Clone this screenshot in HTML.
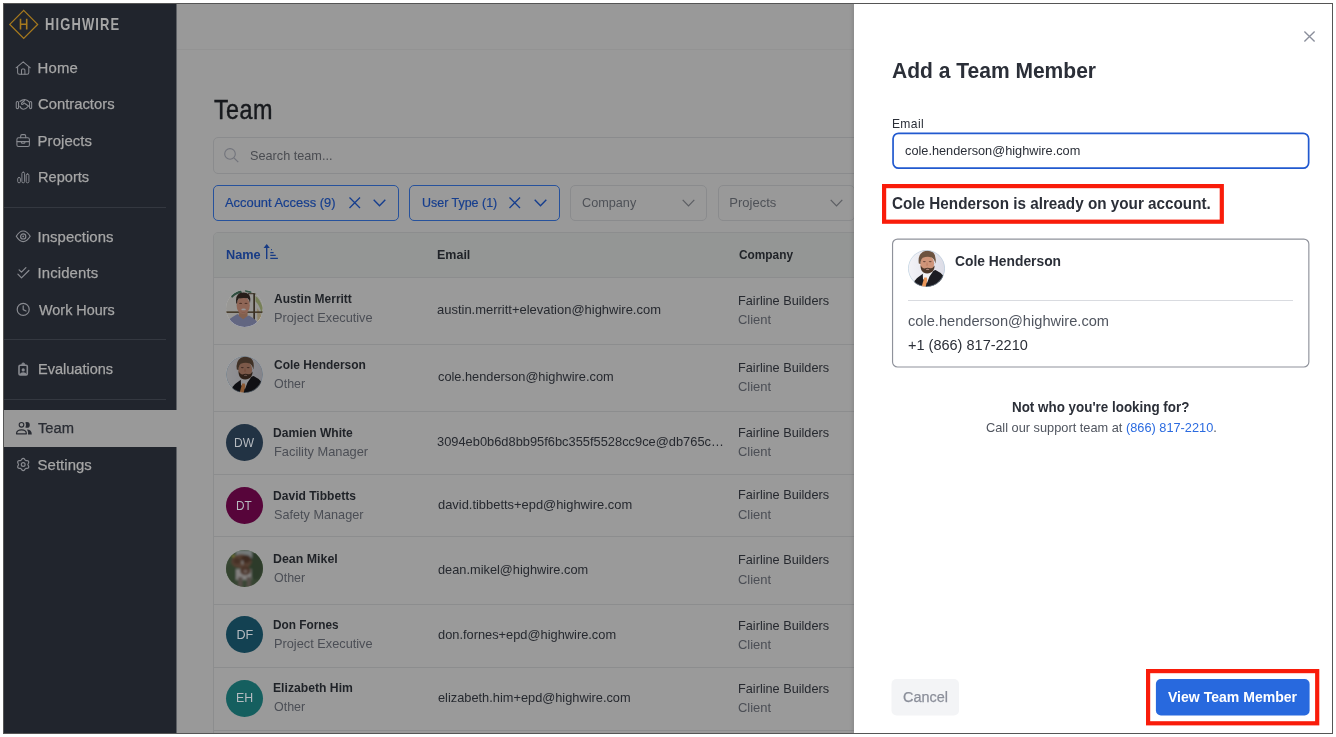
<!DOCTYPE html>
<html lang="en"><head><meta charset="utf-8"><title>Team - Highwire</title>
<style>
html,body{margin:0;padding:0;background:#fff;}
body{width:1336px;height:737px;overflow:hidden;position:relative;font-family:"Liberation Sans",sans-serif;}
#clip{position:absolute;left:4px;top:4px;width:1328px;height:729px;overflow:hidden;background:#999;}
#org{position:absolute;left:-4px;top:-4px;width:1336px;height:737px;}
#frame{position:absolute;left:3px;top:3px;width:1328px;height:729px;border:1px solid #555;pointer-events:none;}
.t{position:absolute;white-space:nowrap;font-family:"Liberation Sans",sans-serif;}
.a{position:absolute;}
.av{position:absolute;border-radius:50%;overflow:hidden;}
.hl{position:absolute;height:1px;}
.chip{position:absolute;box-sizing:border-box;border-radius:5px;}
.red{position:absolute;box-sizing:border-box;border:4px solid #f91c0a;}
svg{position:absolute;overflow:visible;}
#org{will-change:transform;}

</style></head>
<body>
<div id="clip"><div id="org">
<main id="team-page">
<div class="a" style="left:176px;top:4px;width:678px;height:45px;background:#999"></div>
<div class="hl" style="left:176px;top:49px;width:678px;background:#939393"></div>
<div class="chip" style="left:213px;top:137px;width:700px;height:37px;border:1px solid #8a8b8d;background:#999"></div>
<svg style="left:224px;top:148px" width="16" height="16" viewBox="0 0 16 16"><circle cx="6" cy="5.9" r="5.3" fill="none" stroke="#72747c" stroke-width="1.1"/><path d="M9.9 9.8 L14.3 14.2" stroke="#72747c" stroke-width="1.2" fill="none"/></svg>
<div class="chip" style="left:213px;top:185px;width:186px;height:36px;border:1px solid #27529c;background:#9a9a9a"></div>
<svg style="left:348.6px;top:196.8px" width="12" height="12" viewBox="0 0 12 12"><path d="M0.5 0.5 L11 11 M11 0.5 L0.5 11" stroke="#163e8e" stroke-width="1.3" fill="none"/></svg>
<svg style="left:373px;top:199px" width="13" height="8" viewBox="0 0 13 8"><path d="M0.7 0.8 L6.5 6.8 L12.3 0.8" stroke="#163e8e" stroke-width="1.4" fill="none"/></svg>
<div class="chip" style="left:409px;top:185px;width:151px;height:36px;border:1px solid #27529c;background:#9a9a9a"></div>
<svg style="left:508.8px;top:196.8px" width="12" height="12" viewBox="0 0 12 12"><path d="M0.5 0.5 L11 11 M11 0.5 L0.5 11" stroke="#163e8e" stroke-width="1.3" fill="none"/></svg>
<svg style="left:534px;top:199px" width="13" height="8" viewBox="0 0 13 8"><path d="M0.7 0.8 L6.5 6.8 L12.3 0.8" stroke="#163e8e" stroke-width="1.4" fill="none"/></svg>
<div class="chip" style="left:570px;top:185px;width:137px;height:36px;border:1px solid #8a8b8d;background:#999"></div>
<svg style="left:682px;top:199px" width="13" height="8" viewBox="0 0 13 8"><path d="M0.7 0.8 L6.5 6.8 L12.3 0.8" stroke="#5c5e63" stroke-width="1.2" fill="none"/></svg>
<div class="chip" style="left:718px;top:185px;width:137px;height:36px;border:1px solid #8a8b8d;background:#999"></div>
<svg style="left:830px;top:199px" width="13" height="8" viewBox="0 0 13 8"><path d="M0.7 0.8 L6.5 6.8 L12.3 0.8" stroke="#5c5e63" stroke-width="1.2" fill="none"/></svg>
<div class="a" style="left:213px;top:232px;width:700px;height:520px;box-sizing:border-box;border:1px solid #8c8d8e;border-radius:5px 0 0 0;background:#9a9a9a"></div>
<div class="a" style="left:214px;top:233px;width:700px;height:45px;background:#949695;border-radius:4px 0 0 0"></div>
<svg style="left:262px;top:243px" width="18" height="18" viewBox="0 0 18 18"><path d="M4.7 15.9 V2.2" stroke="#173b85" stroke-width="1.4" fill="none"/><path d="M1.6 5 L4.7 1.1 L7.8 5 Z" fill="#173b85"/><path d="M9 6.7 H9.9 M8.3 9.6 H11.6 M8.3 12.4 H13.7 M8.3 15.4 H15.9" stroke="#173b85" stroke-width="1.2" fill="none"/></svg>
<div class="hl" style="left:214px;top:277px;width:700px;background:#8c8d8e"></div>
<div class="av" style="left:226px;top:290px;width:37px;height:37px;"><svg style="left:0;top:0" width="37" height="37" viewBox="0 0 37 37"><defs><filter id="ba" x="-10%" y="-10%" width="120%" height="120%"><feGaussianBlur stdDeviation="0.6"/></filter></defs><rect width="37" height="37" fill="#fdfcf7"/><g filter="url(#ba)"><path d="M5 6 Q9 1 15 0.5 L16 3 Q10 3.5 6 8 Z" fill="#4f7f68"/><path d="M19 0 L26 1.4 L25 3 L19.5 2 Z" fill="#5f8f78"/><path d="M29.5 6 Q34 9 36.5 17 L36 24 Q33 14 29.5 11.5 Z" fill="#c6d592"/><path d="M31 18 Q35 22 35.5 29 L31.5 32 Z" fill="#efdcae"/><rect x="27.3" y="3.2" width="1.7" height="30" fill="#5a4c3a"/><rect x="0" y="21.4" width="37" height="1.5" fill="#6a583c"/><rect x="22" y="3.2" width="12" height="1" fill="#5a4c3a"/><path d="M3 29.5 Q7 26.5 11.5 24 L17 27.5 L23 25.5 Q28 28 31.5 32.5 L28 37 L8 37 Z" fill="#a4aad8"/><path d="M12.8 22 L12.8 26 L17.2 29.3 L21.6 26 L21.6 22 Z" fill="#dba083"/><ellipse cx="17.2" cy="15.4" rx="6.6" ry="8.6" fill="#eeaa90"/><path d="M10.2 13.5 Q9.2 5 14 3 Q19.6 1.2 23 4.6 Q25 7.6 24 13 Q23.4 9.4 21.6 8.2 Q16.6 7.4 12.6 8.6 Q11.2 10 11 13.6 Z" fill="#42332c"/><ellipse cx="14.6" cy="13.4" rx="1.5" ry="0.7" fill="#8a5a48"/><ellipse cx="20" cy="13.4" rx="1.5" ry="0.7" fill="#8a5a48"/><ellipse cx="17.6" cy="19.4" rx="2.3" ry="0.85" fill="#fafaff"/><path d="M14.5 21.5 Q17.5 24 20.5 21.5 Q17.5 23 14.5 21.5Z" fill="#c98a70"/></g></svg>
<div class="a" style="left:0;top:0;width:37px;height:37px;background:rgba(0,0,0,0.4)"></div></div>
<div class="hl" style="left:214px;top:344px;width:700px;background:#8c8d8e"></div>
<div class="av" style="left:226px;top:356px;width:37px;height:37px;"><svg style="left:0;top:0" width="37" height="37" viewBox="0 0 37 37"><defs><filter id="bc" x="-10%" y="-10%" width="120%" height="120%"><feGaussianBlur stdDeviation="0.55"/></filter><linearGradient id="gc" x1="0" x2="1"><stop offset="0" stop-color="#f3f3f7"/><stop offset="1" stop-color="#dcdce6"/></linearGradient></defs><rect width="37" height="37" fill="url(#gc)"/><g filter="url(#bc)"><path d="M5.5 37 L6.5 31 Q9 27.5 14.5 24 L20 22.5 L27.5 20 Q33 22.5 35.5 26 L37 37 Z" fill="#1d1c20"/><path d="M14.8 24.5 L16 21 L25.8 20.2 L21.5 26.5 L19 33 L15 29 Z" fill="#f1f1f4"/><path d="M16.2 27.6 L18.8 27.4 L19.3 30 L17.6 37 L13.6 37 Z" fill="#ea9658"/><ellipse cx="19.2" cy="13.6" rx="7" ry="8.2" fill="#cf957a"/><path d="M12.6 15 Q12.4 20.5 15.5 22.6 Q19 24.3 23 22.6 Q26.6 20.6 26.6 15.5 Q24.6 18.6 22.3 18.3 Q19.6 17.4 16.6 18.4 Q14 18.4 12.6 15 Z" fill="#4e382b"/><path d="M10.8 13.5 Q9.6 5 15 1.8 Q20.5 -0.6 25.2 2.6 Q28.8 6 27.4 13.6 Q26.4 8.8 23.8 7.4 Q19 6 14.8 7.8 Q12.8 9.4 12.4 14 Z" fill="#6c5340"/><ellipse cx="19.6" cy="19.2" rx="1.7" ry="0.5" fill="#c49a92"/><ellipse cx="16.3" cy="11.6" rx="1.5" ry="0.7" fill="#6e4a3c"/><ellipse cx="22.2" cy="11.6" rx="1.5" ry="0.7" fill="#6e4a3c"/><path d="M18.4 12.5 L19.6 12.5 L20.2 15.8 L18 15.8 Z" fill="#c4866b"/></g><circle cx="18.5" cy="18.5" r="18.2" fill="none" stroke="#a9c6d8" stroke-width="0.6"/></svg>
<div class="a" style="left:0;top:0;width:37px;height:37px;background:rgba(0,0,0,0.4)"></div></div>
<div class="hl" style="left:214px;top:411px;width:700px;background:#8c8d8e"></div>
<div class="av" style="left:226px;top:424px;width:37px;height:37px;background:#223344"></div>
<div class="hl" style="left:214px;top:474px;width:700px;background:#8c8d8e"></div>
<div class="av" style="left:226px;top:487px;width:37px;height:37px;background:#57053a"></div>
<div class="hl" style="left:214px;top:536px;width:700px;background:#8c8d8e"></div>
<div class="av" style="left:226px;top:550px;width:37px;height:37px;"><svg style="left:0;top:0" width="37" height="37" viewBox="0 0 37 37"><defs><filter id="bd" x="-10%" y="-10%" width="120%" height="120%"><feGaussianBlur stdDeviation="0.8"/></filter></defs><rect width="37" height="37" fill="#5d7556"/><g filter="url(#bd)"><ellipse cx="30" cy="16" rx="7" ry="14" fill="#4c6446"/><ellipse cx="5" cy="24" rx="6" ry="10" fill="#566f50"/><circle cx="7.4" cy="6" r="1.5" fill="#d6d64a"/><path d="M9.8 0 H26 V8 H9.8 Z" fill="#c3cccc"/><path d="M10 19 H25.4 V30 H10 Z" fill="#dcd8d6"/><path d="M12 27 H16.6 V37 H12 Z M20.5 27 H25 V37 H20.5 Z" fill="#8e8078"/><ellipse cx="15.5" cy="11.5" rx="10.2" ry="7.2" fill="#8f6a55"/><ellipse cx="20" cy="9" rx="5" ry="4" fill="#6b4937"/><ellipse cx="11" cy="11" rx="3.4" ry="3" fill="#75523f"/><ellipse cx="19.4" cy="20.8" rx="5.2" ry="4.4" fill="#7a5543"/><ellipse cx="19.4" cy="21.4" rx="2.2" ry="2" fill="#b09a90"/><ellipse cx="16.4" cy="12.6" rx="0.9" ry="2.4" fill="#d8d4d0"/></g></svg>
<div class="a" style="left:0;top:0;width:37px;height:37px;background:rgba(0,0,0,0.4)"></div></div>
<div class="hl" style="left:214px;top:604px;width:700px;background:#8c8d8e"></div>
<div class="av" style="left:226px;top:616px;width:37px;height:37px;background:#134152"></div>
<div class="hl" style="left:214px;top:667px;width:700px;background:#8c8d8e"></div>
<div class="av" style="left:226px;top:680px;width:37px;height:37px;background:#155f5f"></div>
<div class="hl" style="left:214px;top:730px;width:700px;background:#8c8d8e"></div>
<span class="t " id="t0" style="left:214.20px;top:94px;font-size:27.2px;line-height:31px;font-weight:400;color:#17191d;-webkit-text-stroke:0.45px #17191d;letter-spacing:0.504px;transform-origin:0 50%;transform:scaleX(0.8600);">Team</span>
<span class="t " id="t1" style="left:249.52px;top:148px;font-size:13.0px;line-height:15px;font-weight:400;color:#4a4c51;transform-origin:0 50%;transform:scaleX(0.9759);">Search team...</span>
<span class="t " id="t2" style="left:225.40px;top:195px;font-size:13.0px;line-height:15px;font-weight:400;color:#163e8e;-webkit-text-stroke:0.2px #163e8e;transform-origin:0 50%;transform:scaleX(0.9928);">Account Access (9)</span>
<span class="t " id="t3" style="left:421.64px;top:195px;font-size:13.0px;line-height:15px;font-weight:400;color:#163e8e;-webkit-text-stroke:0.2px #163e8e;transform-origin:0 50%;transform:scaleX(0.9584);">User Type (1)</span>
<span class="t " id="t4" style="left:581.53px;top:195px;font-size:13.0px;line-height:15px;font-weight:400;color:#4e5157;transform-origin:0 50%;transform:scaleX(0.9745);">Company</span>
<span class="t " id="t5" style="left:729.20px;top:195px;font-size:13.0px;line-height:15px;font-weight:400;color:#4e5157;letter-spacing:0.029px;">Projects</span>
<span class="t " id="t6" style="left:225.92px;top:247px;font-size:13.0px;line-height:15px;font-weight:700;color:#173b85;transform-origin:0 50%;transform:scaleX(0.9794);">Name</span>
<span class="t " id="t7" style="left:436.74px;top:247px;font-size:13.0px;line-height:15px;font-weight:700;color:#1f2227;transform-origin:0 50%;transform:scaleX(0.9606);">Email</span>
<span class="t " id="t8" style="left:739.30px;top:247px;font-size:13.0px;line-height:15px;font-weight:700;color:#1f2227;transform-origin:0 50%;transform:scaleX(0.9119);">Company</span>
<span class="t " id="t9" style="left:274.40px;top:291px;font-size:13.0px;line-height:15px;font-weight:700;color:#1f2227;transform-origin:0 50%;transform:scaleX(0.9212);">Austin Merritt</span>
<span class="t " id="t10" style="left:273.52px;top:310px;font-size:13.0px;line-height:15px;font-weight:400;color:#4b4e55;transform-origin:0 50%;transform:scaleX(0.9818);">Project Executive</span>
<span class="t " id="t11" style="left:436.90px;top:302px;font-size:13.0px;line-height:15px;font-weight:400;color:#26292f;transform-origin:0 50%;transform:scaleX(0.9973);">austin.merritt+elevation@highwire.com</span>
<span class="t " id="t12" style="left:738.32px;top:293px;font-size:13.0px;line-height:15px;font-weight:400;color:#26292f;transform-origin:0 50%;transform:scaleX(0.9772);">Fairline Builders</span>
<span class="t " id="t13" style="left:738.30px;top:312px;font-size:13.0px;line-height:15px;font-weight:400;color:#4b4e55;transform-origin:0 50%;transform:scaleX(0.9969);">Client</span>
<span class="t " id="t14" style="left:274.40px;top:357px;font-size:13.0px;line-height:15px;font-weight:700;color:#1f2227;transform-origin:0 50%;transform:scaleX(0.9222);">Cole Henderson</span>
<span class="t " id="t15" style="left:273.54px;top:376px;font-size:13.0px;line-height:15px;font-weight:400;color:#4b4e55;transform-origin:0 50%;transform:scaleX(0.9594);">Other</span>
<span class="t " id="t16" style="left:437.90px;top:369px;font-size:13.0px;line-height:15px;font-weight:400;color:#26292f;transform-origin:0 50%;transform:scaleX(0.9831);">cole.henderson@highwire.com</span>
<span class="t " id="t17" style="left:738.32px;top:360px;font-size:13.0px;line-height:15px;font-weight:400;color:#26292f;transform-origin:0 50%;transform:scaleX(0.9772);">Fairline Builders</span>
<span class="t " id="t18" style="left:738.30px;top:379px;font-size:13.0px;line-height:15px;font-weight:400;color:#4b4e55;transform-origin:0 50%;transform:scaleX(0.9969);">Client</span>
<span class="t " id="t19" style="left:234.45px;top:436px;font-size:12.6px;line-height:14px;font-weight:400;color:#b6bbc0;transform-origin:0 50%;transform:scaleX(0.9500);">DW</span>
<span class="t " id="t20" style="left:273.47px;top:425px;font-size:13.0px;line-height:15px;font-weight:700;color:#1f2227;transform-origin:0 50%;transform:scaleX(0.9282);">Damien White</span>
<span class="t " id="t21" style="left:273.51px;top:444px;font-size:13.0px;line-height:15px;font-weight:400;color:#4b4e55;transform-origin:0 50%;transform:scaleX(0.9872);">Facility Manager</span>
<span class="t " id="t22" style="left:436.91px;top:434px;font-size:13.0px;line-height:15px;font-weight:400;color:#26292f;transform-origin:0 50%;transform:scaleX(0.9889);">3094eb0b6d8bb95f6bc355f5528cc9ce@db765c…</span>
<span class="t " id="t23" style="left:738.32px;top:425px;font-size:13.0px;line-height:15px;font-weight:400;color:#26292f;transform-origin:0 50%;transform:scaleX(0.9772);">Fairline Builders</span>
<span class="t " id="t24" style="left:738.30px;top:444px;font-size:13.0px;line-height:15px;font-weight:400;color:#4b4e55;transform-origin:0 50%;transform:scaleX(0.9969);">Client</span>
<span class="t " id="t25" style="left:236.46px;top:499px;font-size:12.6px;line-height:14px;font-weight:400;color:#b6bbc0;transform-origin:0 50%;transform:scaleX(0.9375);">DT</span>
<span class="t " id="t26" style="left:273.47px;top:488px;font-size:13.0px;line-height:15px;font-weight:700;color:#1f2227;transform-origin:0 50%;transform:scaleX(0.9284);">David Tibbetts</span>
<span class="t " id="t27" style="left:273.53px;top:507px;font-size:13.0px;line-height:15px;font-weight:400;color:#4b4e55;transform-origin:0 50%;transform:scaleX(0.9747);">Safety Manager</span>
<span class="t " id="t28" style="left:437.90px;top:497px;font-size:13.0px;line-height:15px;font-weight:400;color:#26292f;transform-origin:0 50%;transform:scaleX(0.9923);">david.tibbetts+epd@highwire.com</span>
<span class="t " id="t29" style="left:738.32px;top:487px;font-size:13.0px;line-height:15px;font-weight:400;color:#26292f;transform-origin:0 50%;transform:scaleX(0.9772);">Fairline Builders</span>
<span class="t " id="t30" style="left:738.30px;top:507px;font-size:13.0px;line-height:15px;font-weight:400;color:#4b4e55;transform-origin:0 50%;transform:scaleX(0.9969);">Client</span>
<span class="t " id="t31" style="left:273.45px;top:551px;font-size:13.0px;line-height:15px;font-weight:700;color:#1f2227;transform-origin:0 50%;transform:scaleX(0.9530);">Dean Mikel</span>
<span class="t " id="t32" style="left:273.54px;top:570px;font-size:13.0px;line-height:15px;font-weight:400;color:#4b4e55;transform-origin:0 50%;transform:scaleX(0.9594);">Other</span>
<span class="t " id="t33" style="left:437.90px;top:562px;font-size:13.0px;line-height:15px;font-weight:400;color:#26292f;transform-origin:0 50%;transform:scaleX(0.9836);">dean.mikel@highwire.com</span>
<span class="t " id="t34" style="left:738.32px;top:552px;font-size:13.0px;line-height:15px;font-weight:400;color:#26292f;transform-origin:0 50%;transform:scaleX(0.9772);">Fairline Builders</span>
<span class="t " id="t35" style="left:738.30px;top:572px;font-size:13.0px;line-height:15px;font-weight:400;color:#4b4e55;transform-origin:0 50%;transform:scaleX(0.9969);">Client</span>
<span class="t " id="t36" style="left:236.40px;top:628px;font-size:12.6px;line-height:14px;font-weight:400;color:#b6bbc0;">DF</span>
<span class="t " id="t37" style="left:273.49px;top:617px;font-size:13.0px;line-height:15px;font-weight:700;color:#1f2227;transform-origin:0 50%;transform:scaleX(0.9085);">Don Fornes</span>
<span class="t " id="t38" style="left:273.52px;top:636px;font-size:13.0px;line-height:15px;font-weight:400;color:#4b4e55;transform-origin:0 50%;transform:scaleX(0.9818);">Project Executive</span>
<span class="t " id="t39" style="left:437.90px;top:627px;font-size:13.0px;line-height:15px;font-weight:400;color:#26292f;transform-origin:0 50%;transform:scaleX(0.9867);">don.fornes+epd@highwire.com</span>
<span class="t " id="t40" style="left:738.32px;top:618px;font-size:13.0px;line-height:15px;font-weight:400;color:#26292f;transform-origin:0 50%;transform:scaleX(0.9772);">Fairline Builders</span>
<span class="t " id="t41" style="left:738.30px;top:637px;font-size:13.0px;line-height:15px;font-weight:400;color:#4b4e55;transform-origin:0 50%;transform:scaleX(0.9969);">Client</span>
<span class="t " id="t42" style="left:236.07px;top:691px;font-size:12.6px;line-height:14px;font-weight:400;color:#b6bbc0;transform-origin:0 50%;transform:scaleX(0.9812);">EH</span>
<span class="t " id="t43" style="left:273.46px;top:680px;font-size:13.0px;line-height:15px;font-weight:700;color:#1f2227;transform-origin:0 50%;transform:scaleX(0.9369);">Elizabeth Him</span>
<span class="t " id="t44" style="left:273.54px;top:699px;font-size:13.0px;line-height:15px;font-weight:400;color:#4b4e55;transform-origin:0 50%;transform:scaleX(0.9594);">Other</span>
<span class="t " id="t45" style="left:437.90px;top:690px;font-size:13.0px;line-height:15px;font-weight:400;color:#26292f;transform-origin:0 50%;transform:scaleX(0.9846);">elizabeth.him+epd@highwire.com</span>
<span class="t " id="t46" style="left:738.32px;top:681px;font-size:13.0px;line-height:15px;font-weight:400;color:#26292f;transform-origin:0 50%;transform:scaleX(0.9772);">Fairline Builders</span>
<span class="t " id="t47" style="left:738.30px;top:700px;font-size:13.0px;line-height:15px;font-weight:400;color:#4b4e55;transform-origin:0 50%;transform:scaleX(0.9969);">Client</span>
</main>
<nav id="sidebar">
<div class="a" style="left:4px;top:4px;width:172px;height:729px;background:#21252d"></div>
<svg style="left:8px;top:9px" width="32" height="32" viewBox="0 0 32 32"><path d="M15.7 1.4 L29.6 15.4 L15.7 29.4 L1.8 15.4 Z" fill="none" stroke="#a77a1e" stroke-width="1.3"/><path d="M12.5 9.8 V20.6 M18.7 9.8 V20.6 M12.5 15.3 H18.7" stroke="#a77a1e" stroke-width="1.6" fill="none"/></svg>
<div class="a" style="left:176px;top:4px;width:1px;height:729px;background:#5d6065"></div>
<div class="a" style="left:4px;top:410px;width:173px;height:37px;background:#999"></div>
<div class="hl" style="left:4px;top:207px;width:162px;background:#343840"></div>
<div class="hl" style="left:4px;top:339px;width:162px;background:#343840"></div>
<div class="hl" style="left:4px;top:399px;width:162px;background:#343840"></div>
<svg style="left:14px;top:60px" width="20" height="17" viewBox="0 0 20 17"><path d="M2.1 7.8 L9.2 1.9 L16.3 7.8" fill="none" stroke="#888a90" stroke-width="1.05" stroke-linecap="round" stroke-linejoin="round"/><path d="M3.6 7 V12.6 Q3.6 14.3 5.3 14.3 H13.1 Q14.8 14.3 14.8 12.6 V7" fill="none" stroke="#888a90" stroke-width="1.05" stroke-linecap="round" stroke-linejoin="round"/><path d="M7.5 14.2 V10.2 Q7.5 9 8.4 9 H10 Q10.9 9 10.9 10.2 V14.2" fill="none" stroke="#888a90" stroke-width="1.05" stroke-linecap="round" stroke-linejoin="round"/></svg>
<svg style="left:14px;top:97px" width="20" height="15" viewBox="0 0 20 15"><rect x="2.25" y="4.4" width="2.3" height="7.2" rx="1.1" fill="none" stroke="#888a90" stroke-width="1.05" stroke-linecap="round" stroke-linejoin="round"/><rect x="15.55" y="4.4" width="2.1" height="7.2" rx="1" fill="none" stroke="#888a90" stroke-width="1.05" stroke-linecap="round" stroke-linejoin="round"/><path d="M5.9 4.5 Q8.5 2.3 11.6 2.7 Q13.8 3.1 15 4.9" fill="none" stroke="#888a90" stroke-width="1.05" stroke-linecap="round" stroke-linejoin="round"/><path d="M5.9 9.3 Q7 12.2 9.6 12.2 Q12 12.2 14 9.5" fill="none" stroke="#888a90" stroke-width="1.05" stroke-linecap="round" stroke-linejoin="round"/><path d="M10.6 3.5 L7.7 6 Q7 7.2 8.2 7.4 Q9.4 7.4 10.2 6 L14.8 9.2" fill="none" stroke="#888a90" stroke-width="1.05" stroke-linecap="round" stroke-linejoin="round"/></svg>
<svg style="left:14px;top:132px" width="20" height="17" viewBox="0 0 20 17"><rect x="2.9" y="5.8" width="12.5" height="8.7" rx="1.6" fill="none" stroke="#888a90" stroke-width="1.05" stroke-linecap="round" stroke-linejoin="round"/><path d="M6.7 5.6 V4 Q6.7 2.6 8 2.6 H10.4 Q11.7 2.6 11.7 4 V5.6" fill="none" stroke="#888a90" stroke-width="1.05" stroke-linecap="round" stroke-linejoin="round"/><path d="M3 9.6 H15.3 M7.4 9.7 V10.4 Q7.4 11.3 8.3 11.3 H10 Q10.9 11.3 10.9 10.4 V9.7" fill="none" stroke="#888a90" stroke-width="1.05" stroke-linecap="round" stroke-linejoin="round"/></svg>
<svg style="left:14px;top:169px" width="20" height="17" viewBox="0 0 20 17"><rect x="3.7" y="8.5" width="2.7" height="5.3" rx="1.3" fill="none" stroke="#888a90" stroke-width="0.95" stroke-linecap="round" stroke-linejoin="round"/><rect x="7.9" y="3.2" width="2.7" height="10.6" rx="1.3" fill="none" stroke="#888a90" stroke-width="0.95" stroke-linecap="round" stroke-linejoin="round"/><rect x="12.2" y="4.9" width="2.7" height="8.9" rx="1.3" fill="none" stroke="#888a90" stroke-width="0.95" stroke-linecap="round" stroke-linejoin="round"/></svg>
<svg style="left:14px;top:229px" width="20" height="15" viewBox="0 0 20 15"><path d="M2.3 7.3 Q5.4 2 9.2 2 Q13 2 16.2 7.3 Q13 12.6 9.2 12.6 Q5.4 12.6 2.3 7.3 Z" fill="none" stroke="#888a90" stroke-width="1.2" stroke-linecap="round" stroke-linejoin="round"/><circle cx="9.2" cy="7.4" r="2.6" fill="none" stroke="#888a90" stroke-width="1.2" stroke-linecap="round" stroke-linejoin="round"/><circle cx="9.2" cy="7.4" r="0.9" fill="#888a90"/></svg>
<svg style="left:14px;top:265px" width="20" height="15" viewBox="0 0 20 15"><path d="M5.1 4.8 L7.5 7.2 L11.9 2.7" fill="none" stroke="#888a90" stroke-width="1.2" stroke-linecap="round" stroke-linejoin="round"/><path d="M3.9 9.1 L7.5 12.9 L14.9 5.5" fill="none" stroke="#888a90" stroke-width="1.2" stroke-linecap="round" stroke-linejoin="round"/></svg>
<svg style="left:14px;top:301px" width="20" height="17" viewBox="0 0 20 17"><circle cx="9.2" cy="8.4" r="6" fill="none" stroke="#888a90" stroke-width="1.2" stroke-linecap="round" stroke-linejoin="round"/><path d="M9.2 4.9 V8.6 L12 10" fill="none" stroke="#888a90" stroke-width="1.2" stroke-linecap="round" stroke-linejoin="round"/></svg>
<svg style="left:14px;top:360px" width="20" height="18" viewBox="0 0 20 18"><rect x="5" y="5.3" width="8.3" height="9.6" rx="1.2" fill="none" stroke="#888a90" stroke-width="1.6" stroke-linecap="round" stroke-linejoin="round"/><path d="M7.6 4.6 Q7.8 2.9 9.2 2.9 Q10.6 2.9 10.8 4.6 Z" fill="#888a90" stroke="#888a90" stroke-width="0.8"/><circle cx="9.2" cy="9.9" r="1.6" fill="#888a90"/><path d="M5.6 14.6 Q6.4 12.2 9.2 12.2 Q12 12.2 12.8 14.6 Z" fill="#888a90"/></svg>
<svg style="left:14px;top:419px" width="20" height="18" viewBox="0 0 20 18"><circle cx="7.5" cy="5.8" r="2.3" fill="none" stroke="#2a2d34" stroke-width="1.15" stroke-linejoin="round"/><path d="M2.5 14.8 Q2.5 10.8 7.6 10.8 Q12.4 10.8 12.4 14.8 Z" fill="none" stroke="#2a2d34" stroke-width="1.15" stroke-linejoin="round"/><path d="M11.4 3.25 Q12.2 3 12.9 3 A2.9 2.9 0 0 1 12.9 8.8 Q12.2 8.8 11.4 8.5 Q12.6 5.9 11.4 3.25 Z" fill="#2a2d34"/><path d="M13 10.6 Q17.8 10.8 17.8 15.4 H14 Q14.4 12.4 13 10.6 Z" fill="#2a2d34"/></svg>
<svg style="left:14px;top:456px" width="20" height="18" viewBox="0 0 20 18"><path d="M13.90 8.50 L14.02 7.99 L14.30 7.42 L14.60 6.74 L14.73 6.04 L14.57 5.40 L14.10 4.94 L13.42 4.70 L12.69 4.62 L12.05 4.58 L11.55 4.43 L11.17 4.08 L10.81 3.54 L10.38 2.94 L9.83 2.48 L9.20 2.30 L8.57 2.48 L8.02 2.94 L7.59 3.54 L7.23 4.08 L6.85 4.43 L6.35 4.58 L5.71 4.62 L4.98 4.70 L4.30 4.94 L3.83 5.40 L3.67 6.04 L3.80 6.74 L4.10 7.42 L4.38 7.99 L4.50 8.50 L4.38 9.01 L4.10 9.58 L3.80 10.26 L3.67 10.96 L3.83 11.60 L4.30 12.06 L4.98 12.30 L5.71 12.38 L6.35 12.42 L6.85 12.57 L7.23 12.92 L7.59 13.46 L8.02 14.06 L8.57 14.52 L9.20 14.70 L9.83 14.52 L10.38 14.06 L10.81 13.46 L11.17 12.92 L11.55 12.57 L12.05 12.42 L12.69 12.38 L13.42 12.30 L14.10 12.06 L14.57 11.60 L14.73 10.96 L14.60 10.26 L14.30 9.58 L14.02 9.01 Z" fill="none" stroke="#888a90" stroke-width="1.2" stroke-linecap="round" stroke-linejoin="round"/><circle cx="9.2" cy="8.5" r="1.9" fill="none" stroke="#888a90" stroke-width="1.2" stroke-linecap="round" stroke-linejoin="round"/></svg>
<span class="t " id="t48" style="left:44.70px;top:15px;font-size:16.2px;line-height:18px;font-weight:700;color:#a6a6a6;letter-spacing:1.429px;transform-origin:0 50%;transform:scaleX(0.8000);">HIGHWIRE</span>
<span class="t " id="t49" style="left:37.60px;top:60px;font-size:14.9px;line-height:16px;font-weight:400;color:#a6a6a6;-webkit-text-stroke:0.25px #a6a6a6;letter-spacing:0.167px;">Home</span>
<span class="t " id="t50" style="left:37.61px;top:96px;font-size:14.9px;line-height:16px;font-weight:400;color:#a6a6a6;-webkit-text-stroke:0.25px #a6a6a6;transform-origin:0 50%;transform:scaleX(0.9947);">Contractors</span>
<span class="t " id="t51" style="left:37.60px;top:133px;font-size:14.9px;line-height:16px;font-weight:400;color:#a6a6a6;-webkit-text-stroke:0.25px #a6a6a6;letter-spacing:0.086px;">Projects</span>
<span class="t " id="t52" style="left:37.62px;top:169px;font-size:14.9px;line-height:16px;font-weight:400;color:#a6a6a6;-webkit-text-stroke:0.25px #a6a6a6;transform-origin:0 50%;transform:scaleX(0.9804);">Reports</span>
<span class="t " id="t53" style="left:37.60px;top:229px;font-size:14.9px;line-height:16px;font-weight:400;color:#a6a6a6;-webkit-text-stroke:0.25px #a6a6a6;letter-spacing:0.050px;">Inspections</span>
<span class="t " id="t54" style="left:37.60px;top:265px;font-size:14.9px;line-height:16px;font-weight:400;color:#a6a6a6;-webkit-text-stroke:0.25px #a6a6a6;letter-spacing:0.112px;">Incidents</span>
<span class="t " id="t55" style="left:38.60px;top:302px;font-size:14.9px;line-height:16px;font-weight:400;color:#a6a6a6;-webkit-text-stroke:0.25px #a6a6a6;transform-origin:0 50%;transform:scaleX(0.9667);">Work Hours</span>
<span class="t " id="t56" style="left:37.62px;top:361px;font-size:14.9px;line-height:16px;font-weight:400;color:#a6a6a6;-webkit-text-stroke:0.25px #a6a6a6;transform-origin:0 50%;transform:scaleX(0.9750);">Evaluations</span>
<span class="t " id="t57" style="left:38.00px;top:420px;font-size:14.9px;line-height:16px;font-weight:400;color:#2a2d34;-webkit-text-stroke:0.25px #2a2d34;transform-origin:0 50%;transform:scaleX(0.9889);">Team</span>
<span class="t " id="t58" style="left:37.60px;top:457px;font-size:14.9px;line-height:16px;font-weight:400;color:#a6a6a6;-webkit-text-stroke:0.25px #a6a6a6;letter-spacing:0.057px;">Settings</span>
</nav>
<aside id="add-member-panel" role="dialog" aria-label="Add a Team Member">
<div class="a" style="left:854px;top:4px;width:478px;height:729px;background:#fff;box-shadow:-2px 0 3px rgba(0,0,0,0.09)"></div>
<svg style="left:1304px;top:31.4px" width="11" height="11" viewBox="0 0 11 11"><path d="M0.4 0.4 L10.6 10.6 M10.6 0.4 L0.4 10.6" stroke="#8a8e9b" stroke-width="1.35" fill="none"/></svg>
<svg style="left:890px;top:130px" width="422" height="42" viewBox="0 0 422 42"><rect x="3.05" y="3.35" width="415.6" height="34.8" rx="5.5" fill="#fff" stroke="#2159cf" stroke-width="1.7"/></svg>
<svg style="left:880px;top:182px" width="350" height="46" viewBox="0 0 350 46"><rect x="4.1" y="4.1" width="337.7" height="35.6" fill="none" stroke="#f91c0a" stroke-width="4.2"/></svg>
<svg style="left:890px;top:236px" width="422" height="134" viewBox="0 0 422 134"><rect x="2.55" y="3.05" width="416.3" height="127.9" rx="5" fill="#fff" stroke="#8f929b" stroke-width="1.15"/></svg>
<div class="av" style="left:907.8px;top:249.8px;width:37px;height:37px;"><svg style="left:0;top:0" width="37" height="37" viewBox="0 0 37 37"><defs><filter id="bc" x="-10%" y="-10%" width="120%" height="120%"><feGaussianBlur stdDeviation="0.55"/></filter><linearGradient id="gc" x1="0" x2="1"><stop offset="0" stop-color="#f3f3f7"/><stop offset="1" stop-color="#dcdce6"/></linearGradient></defs><rect width="37" height="37" fill="url(#gc)"/><g filter="url(#bc)"><path d="M5.5 37 L6.5 31 Q9 27.5 14.5 24 L20 22.5 L27.5 20 Q33 22.5 35.5 26 L37 37 Z" fill="#1d1c20"/><path d="M14.8 24.5 L16 21 L25.8 20.2 L21.5 26.5 L19 33 L15 29 Z" fill="#f1f1f4"/><path d="M16.2 27.6 L18.8 27.4 L19.3 30 L17.6 37 L13.6 37 Z" fill="#ea9658"/><ellipse cx="19.2" cy="13.6" rx="7" ry="8.2" fill="#cf957a"/><path d="M12.6 15 Q12.4 20.5 15.5 22.6 Q19 24.3 23 22.6 Q26.6 20.6 26.6 15.5 Q24.6 18.6 22.3 18.3 Q19.6 17.4 16.6 18.4 Q14 18.4 12.6 15 Z" fill="#4e382b"/><path d="M10.8 13.5 Q9.6 5 15 1.8 Q20.5 -0.6 25.2 2.6 Q28.8 6 27.4 13.6 Q26.4 8.8 23.8 7.4 Q19 6 14.8 7.8 Q12.8 9.4 12.4 14 Z" fill="#6c5340"/><ellipse cx="19.6" cy="19.2" rx="1.7" ry="0.5" fill="#c49a92"/><ellipse cx="16.3" cy="11.6" rx="1.5" ry="0.7" fill="#6e4a3c"/><ellipse cx="22.2" cy="11.6" rx="1.5" ry="0.7" fill="#6e4a3c"/><path d="M18.4 12.5 L19.6 12.5 L20.2 15.8 L18 15.8 Z" fill="#c4866b"/></g><circle cx="18.5" cy="18.5" r="18.2" fill="none" stroke="#a9c6d8" stroke-width="0.6"/></svg>
</div>
<div class="hl" style="left:908px;top:300px;width:385px;background:#d9dbe0"></div>
<svg style="left:890px;top:677px" width="72" height="42" viewBox="0 0 72 42"><rect x="1.5" y="2" width="67.5" height="36.5" rx="5" fill="#f3f4f6"/></svg>
<svg style="left:1154px;top:677px" width="160" height="42" viewBox="0 0 160 42"><rect x="1.9" y="2" width="153.7" height="36.5" rx="5" fill="#2869de"/></svg>
<svg style="left:1144px;top:667px" width="180" height="62" viewBox="0 0 180 62"><rect x="4.1" y="4.1" width="169.1" height="52.2" fill="none" stroke="#f91c0a" stroke-width="4.2"/></svg>
<span class="t " id="t59" style="left:892.07px;top:58px;font-size:22.6px;line-height:25px;font-weight:700;color:#2b2f38;transform-origin:0 50%;transform:scaleX(0.9303);">Add a Team Member</span>
<span class="t " id="t60" style="left:891.90px;top:117px;font-size:12.1px;line-height:14px;font-weight:400;color:#2b2f38;letter-spacing:0.375px;">Email</span>
<span class="t " id="t61" style="left:904.60px;top:143px;font-size:13.0px;line-height:15px;font-weight:400;color:#2b2f38;transform-origin:0 50%;transform:scaleX(0.9809);">cole.henderson@highwire.com</span>
<span class="t " id="t62" style="left:891.90px;top:194px;font-size:16.9px;line-height:19px;font-weight:700;color:#2b2f38;transform-origin:0 50%;transform:scaleX(0.9034);">Cole Henderson is already on your account.</span>
<span class="t " id="t63" style="left:955.28px;top:252px;font-size:15.0px;line-height:17px;font-weight:700;color:#2b2f38;transform-origin:0 50%;transform:scaleX(0.9221);">Cole Henderson</span>
<span class="t " id="t64" style="left:907.62px;top:313px;font-size:14.9px;line-height:16px;font-weight:400;color:#50555f;transform-origin:0 50%;transform:scaleX(0.9823);">cole.henderson@highwire.com</span>
<span class="t " id="t65" style="left:907.83px;top:337px;font-size:14.9px;line-height:16px;font-weight:400;color:#2b2f38;transform-origin:0 50%;transform:scaleX(0.9746);">+1 (866) 817-2210</span>
<span class="t " id="t66" style="left:1012.11px;top:398px;font-size:15.0px;line-height:17px;font-weight:700;color:#2b2f38;transform-origin:0 50%;transform:scaleX(0.8934);">Not who you're looking for?</span>
<span class="t " id="t67" style="left:985.62px;top:420px;font-size:13.0px;line-height:15px;font-weight:400;color:#50555f;transform-origin:0 50%;transform:scaleX(0.9828);">Call our support team at <span style="color:#2b6be0">(866) 817-2210</span>.</span>
<span class="t " id="t68" style="left:902.63px;top:689px;font-size:14.9px;line-height:16px;font-weight:400;color:#8b8f9a;-webkit-text-stroke:0.25px #8b8f9a;transform-origin:0 50%;transform:scaleX(0.9689);">Cancel</span>
<span class="t " id="t69" style="left:1168.00px;top:688px;font-size:15.0px;line-height:17px;font-weight:700;color:#fff;transform-origin:0 50%;transform:scaleX(0.9362);">View Team Member</span>
</aside>

</div></div>
<div id="frame"></div>

</body></html>
